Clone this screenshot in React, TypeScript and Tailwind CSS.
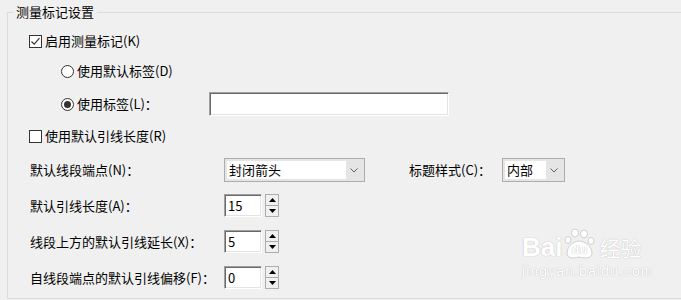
import React from 'react';

const font = "font-['Microsoft_YaHei','Noto_Sans_CJK_SC',sans-serif]";

const CheckBox = ({ checked }: { checked?: boolean }) => (
  <span className="flex h-[13px] w-[13px] shrink-0 items-center justify-center border border-[#333333] bg-white">
    {checked && (
      <svg width="11" height="11" viewBox="0 0 11 11">
        <path d="M1.5 5.5 L4.2 8.2 L9.5 2.2" fill="none" stroke="#333333" strokeWidth="1.2" />
      </svg>
    )}
  </span>
);

const Radio = ({ checked }: { checked?: boolean }) => (
  <span className="flex h-[13px] w-[13px] shrink-0 items-center justify-center rounded-full border border-[#333333] bg-white">
    {checked && <span className="h-[7px] w-[7px] rounded-full bg-[#333333]" />}
  </span>
);

const sunken =
  'border border-t-[#a0a0a0] border-l-[#a0a0a0] border-r-white border-b-white bg-white shadow-[inset_1px_1px_0_#696969,inset_-1px_-1px_0_#e3e3e3]';

const Combo = ({ value, width, textWidth }: { value: string; width: string; textWidth: string }) => (
  <div className={`flex h-[24px] ${width} items-center border border-[#adadad] bg-[#e5e5e5] p-[2px]`}>
    <div className={`flex h-[18px] ${textWidth} items-center bg-white pl-[2px] text-[13px] text-black`}>{value}</div>
    <div className="flex flex-1 items-center justify-center">
      <svg width="8" height="5" viewBox="0 0 8 5">
        <path d="M0.5 0.5 L4 4 L7.5 0.5" fill="none" stroke="#606060" strokeWidth="1" />
      </svg>
    </div>
  </div>
);

const Spin = ({ value }: { value: string }) => (
  <div className="flex h-[23px] items-center gap-[3px]">
    <div className={`flex h-[23px] w-[38px] items-center pl-[3px] text-[13px] text-black ${sunken}`}>{value}</div>
    <div className="flex h-[23px] w-[14px] flex-col">
      <div className="flex flex-1 items-center justify-center border border-[#adadad] bg-[#f0f0f0]">
        <svg width="7" height="4" viewBox="0 0 7 4">
          <path d="M0 4 L3.5 0 L7 4 Z" fill="#000" />
        </svg>
      </div>
      <div className="flex flex-1 items-center justify-center border border-t-0 border-[#adadad] bg-[#f0f0f0]">
        <svg width="7" height="4" viewBox="0 0 7 4">
          <path d="M0 0 L3.5 4 L7 0 Z" fill="#000" />
        </svg>
      </div>
    </div>
  </div>
);

// faint site watermark in the corner
const Watermark = () => (
  <div className="pointer-events-none absolute left-[522px] top-[228px] flex flex-col items-start text-white [text-shadow:0_0_1px_#c4c4c4,0_0_1px_#c4c4c4]">
    <div className="flex items-end">
      <span className="font-['Liberation_Sans',sans-serif] text-[26px] font-bold leading-[26px]">Bai</span>
      <div className="relative ml-[1px] h-[32px] w-[34px]">
        <svg width="34" height="32" viewBox="0 0 34 32" className="absolute left-0 top-0">
          <g fill="#ffffff" stroke="#cfcfcf" strokeWidth="1">
            <ellipse cx="12" cy="5" rx="3.5" ry="4" />
            <ellipse cx="21" cy="6" rx="3.5" ry="4" />
            <ellipse cx="5" cy="12" rx="3" ry="3.5" />
            <ellipse cx="28" cy="13" rx="3" ry="3.5" />
            <path d="M16 13 C10 13 4 19 4 25 C4 30 9 31 16 29 C23 31 29 30 29 25 C29 19 22 13 16 13 Z" />
          </g>
        </svg>
        <span className="absolute left-[8px] top-[15px] font-['Liberation_Sans',sans-serif] text-[13px] font-bold leading-[14px] text-white">du</span>
      </div>
      <span className="ml-[2px] text-[21px] leading-[26px]">经验</span>
    </div>
    <span className="mt-[4px] font-['Liberation_Sans',sans-serif] text-[14px] leading-[15px] tracking-[1.1px]">jingyan.baidu.com</span>
  </div>
);

export default function App() {
  return (
    <div className={`relative h-[300px] w-[681px] overflow-hidden bg-[#f0f0f0] pt-[12px] text-[13px] text-black ${font}`}>
      <div className="relative ml-[7px] h-[287px] w-[700px] border border-[#dcdcdc]">
        <span className="absolute left-[5px] top-[-11px] bg-[#f0f0f0] px-[3px] text-[13px] leading-[20px]">测量标记设置</span>

        <div className="flex flex-col pt-[16px]">
          <div className="flex h-[24px] items-center pl-[21px]">
            <CheckBox checked />
            <span className="ml-[3px]">启用测量标记(K)</span>
          </div>

          <div className="mt-[6px] flex h-[24px] items-center pl-[53px]">
            <Radio />
            <span className="ml-[3px]">使用默认标签(D)</span>
          </div>

          <div className="mt-[9px] flex h-[24px] items-center pl-[53px]">
            <Radio checked />
            <span className="ml-[3px] w-[132px]">使用标签(L)：</span>
            <div className={`h-[24px] w-[240px] ${sunken}`} />
          </div>

          <div className="mt-[8px] flex h-[24px] items-center pl-[21px]">
            <CheckBox />
            <span className="ml-[3px]">使用默认引线长度(R)</span>
          </div>

          <div className="mt-[10px] flex h-[24px] items-center pl-[22px]">
            <span className="w-[194px]">默认线段端点(N)：</span>
            <Combo value="封闭箭头" width="w-[141px]" textWidth="w-[119px]" />
            <span className="ml-[44px] w-[93px]">标题样式(C)：</span>
            <Combo value="内部" width="w-[63px]" textWidth="w-[41px]" />
          </div>

          <div className="mt-[12px] flex h-[23px] items-center pl-[22px]">
            <span className="w-[194px]">默认引线长度(A)：</span>
            <Spin value="15" />
          </div>

          <div className="mt-[13px] flex h-[23px] items-center pl-[22px]">
            <span className="w-[194px]">线段上方的默认引线延长(X)：</span>
            <Spin value="5" />
          </div>

          <div className="mt-[13px] flex h-[23px] items-center pl-[22px]">
            <span className="w-[194px]">自线段端点的默认引线偏移(F)：</span>
            <Spin value="0" />
          </div>
        </div>
      </div>
      <Watermark />
    </div>
  );
}
